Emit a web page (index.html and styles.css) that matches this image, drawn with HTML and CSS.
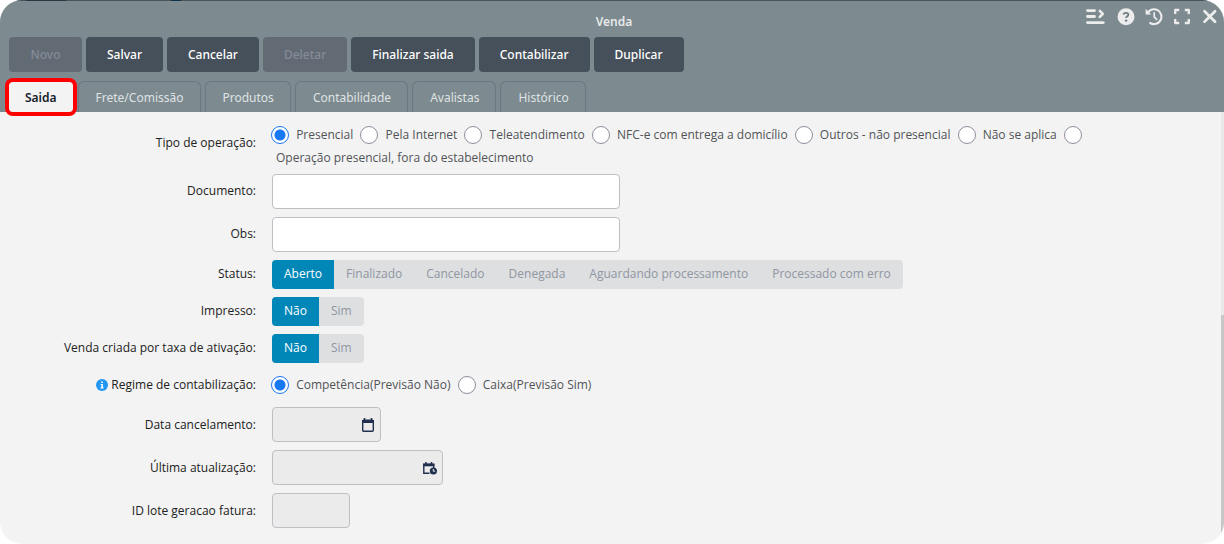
FILE: index.html
```html
<!DOCTYPE html>
<html lang="pt-BR">
<head>
<meta charset="utf-8">
<meta name="viewport" content="width=device-width, initial-scale=1">
<title>Venda</title>
<link rel="stylesheet" href="styles.css">
</head>
<body>
<main class="window">
  <header class="header">
    <div class="titlebar">
      <h1 class="title">Venda</h1>
      <div class="tools">
        <button class="tool" type="button" aria-label="Menu">
          <svg width="22" height="18" viewBox="0 0 22 18" fill="none" stroke="currentColor" stroke-width="2.9" stroke-linecap="round"><path d="M2.500 2.600h7M2.500 8.500h7M2.500 14.600h15.800"/><path d="M14.800 2.800l3 3-3 3" stroke-linejoin="round" stroke-width="2.600"/></svg>
        </button>
        <button class="tool" type="button" aria-label="Ajuda">
          <svg width="18" height="18" viewBox="0 0 18 18"><circle cx="9" cy="8.700" r="8.500" fill="currentColor"/><path d="M6.500 6.700c.2-1.300 1.200-1.900 2.400-1.900 1.500 0 2.500.8 2.500 2 0 1.500-2.300 1.500-2.300 3.300" fill="none" stroke="#6e7b80" stroke-width="1.800"/><circle cx="9.100" cy="12.600" r="1.200" fill="#6e7b80"/></svg>
        </button>
        <button class="tool" type="button" aria-label="Histórico de alterações">
          <svg width="18" height="18" viewBox="0 0 18 18" fill="none" stroke="currentColor" stroke-width="2.100"><path d="M2.500 5.200A7.400 7.400 0 1 1 5.200 15" stroke-linecap="round"/><path d="M.6 .8v5.600h5.600z" fill="currentColor" stroke="none"/><path d="M9.200 5v4l2.400 2.400" stroke-width="1.800" stroke-linecap="round"/></svg>
        </button>
        <button class="tool" type="button" aria-label="Tela cheia">
          <svg width="18" height="18" viewBox="0 0 18 18" fill="none" stroke="currentColor" stroke-width="2.300" stroke-linejoin="round"><path d="M2.200 6v-4h4M11.800 2h4v4M15.800 11v4h-4M6.200 15h-4v-4"/></svg>
        </button>
        <button class="tool" type="button" aria-label="Fechar">
          <svg width="18" height="18" viewBox="0 0 18 18" fill="none" stroke="currentColor" stroke-width="2.700" stroke-linecap="round"><path d="M3.500 3.200l10.600 10.600M14.100 3.200l-10.600 10.600"/></svg>
        </button>
      </div>
    </div>
    <div class="actions">
      <button class="action" type="button" disabled>Novo</button>
      <button class="action" type="button">Salvar</button>
      <button class="action" type="button">Cancelar</button>
      <button class="action" type="button" disabled>Deletar</button>
      <button class="action" type="button">Finalizar saida</button>
      <button class="action" type="button">Contabilizar</button>
      <button class="action" type="button">Duplicar</button>
    </div>
    <nav class="tabs">
      <button class="tab tab-active" type="button">Saida</button>
      <button class="tab" type="button">Frete/Comissão</button>
      <button class="tab" type="button">Produtos</button>
      <button class="tab" type="button">Contabilidade</button>
      <button class="tab" type="button">Avalistas</button>
      <button class="tab" type="button">Histórico</button>
    </nav>
  </header>

  <form class="form">
    <div class="row">
      <span class="label" id="tipo">Tipo de operação:</span>
      <div class="radios" role="radiogroup" aria-labelledby="tipo">
        <input class="radio" type="radio" name="tipo" id="t1" checked>
        <label class="option" for="t1">Presencial</label>
        <input class="radio" type="radio" name="tipo" id="t2">
        <label class="option" for="t2">Pela Internet</label>
        <input class="radio" type="radio" name="tipo" id="t3">
        <label class="option" for="t3">Teleatendimento</label>
        <input class="radio" type="radio" name="tipo" id="t4">
        <label class="option" for="t4">NFC-e com entrega a domicílio</label>
        <input class="radio" type="radio" name="tipo" id="t5">
        <label class="option" for="t5">Outros - não presencial</label>
        <input class="radio" type="radio" name="tipo" id="t6">
        <label class="option" for="t6">Não se aplica</label>
        <input class="radio" type="radio" name="tipo" id="t7">
        <label class="option" for="t7">Operação presencial, fora do estabelecimento</label>
      </div>
    </div>
    <div class="row">
      <label class="label" for="documento">Documento:</label>
      <input class="field field-wide" type="text" id="documento">
    </div>
    <div class="row">
      <label class="label" for="obs">Obs:</label>
      <input class="field field-wide" type="text" id="obs">
    </div>
    <div class="row">
      <span class="label" id="status">Status:</span>
      <div class="segments" role="group" aria-labelledby="status">
        <button class="segment segment-on" type="button">Aberto</button>
        <button class="segment" type="button">Finalizado</button>
        <button class="segment" type="button">Cancelado</button>
        <button class="segment" type="button">Denegada</button>
        <button class="segment" type="button">Aguardando processamento</button>
        <button class="segment" type="button">Processado com erro</button>
      </div>
    </div>
    <div class="row">
      <span class="label" id="impresso">Impresso:</span>
      <div class="segments" role="group" aria-labelledby="impresso">
        <button class="segment segment-on" type="button">Não</button>
        <button class="segment" type="button">Sim</button>
      </div>
    </div>
    <div class="row">
      <span class="label" id="taxa">Venda criada por taxa de ativação:</span>
      <div class="segments" role="group" aria-labelledby="taxa">
        <button class="segment segment-on" type="button">Não</button>
        <button class="segment" type="button">Sim</button>
      </div>
    </div>
    <div class="row">
      <span class="label" id="regime">
        <svg class="info" width="12" height="12" viewBox="0 0 12 12"><circle cx="6" cy="6" r="6" fill="#2196f3"/><path d="M5.200 2.500h1.700v1.500H5.200zM4.600 5h2.300v3.400h.8v1.100H4.400V8.400h.9V6.100h-.7z" fill="#fff"/></svg>
        Regime de contabilização:</span>
      <div class="radios radios-single" role="radiogroup" aria-labelledby="regime">
        <input class="radio" type="radio" name="regime" id="r1" checked>
        <label class="option" for="r1">Competência(Previsão Não)</label>
        <input class="radio" type="radio" name="regime" id="r2">
        <label class="option" for="r2">Caixa(Previsão Sim)</label>
      </div>
    </div>
    <div class="row">
      <label class="label" for="cancelamento">Data cancelamento:</label>
      <div class="picker picker-date">
        <input class="field" type="text" id="cancelamento" disabled>
        <svg class="picker-icon" width="14" height="16" viewBox="0 0 14 16"><path d="M3.500 1v3M10.500 1v3" stroke="#22304f" stroke-width="1.600"/><rect x="1.700" y="3.200" width="10.600" height="11.100" rx="1" fill="none" stroke="#22304f" stroke-width="1.400"/><path d="M1 3h12v3H1z" fill="#22304f"/></svg>
      </div>
    </div>
    <div class="row">
      <label class="label" for="atualizacao">Última atualização:</label>
      <div class="picker picker-datetime">
        <input class="field" type="text" id="atualizacao" disabled>
        <svg class="picker-icon" width="14" height="16" viewBox="0 0 14 16"><path d="M3 2v2M8.500 2v2" stroke="#22304f" stroke-width="1.500"/><path d="M6.500 13.300H.8V4.500h9.900V8" fill="none" stroke="#22304f" stroke-width="1.400"/><path d="M.1 3.500h11.300v2.800H.1z" fill="#22304f"/><circle cx="10.400" cy="11" r="3.600" fill="#22304f"/><path d="M10.300 9v2.200h1.800" fill="none" stroke="#eee" stroke-width="1"/></svg>
      </div>
    </div>
    <div class="row">
      <label class="label" for="lote">ID lote geracao fatura:</label>
      <input class="field field-short" type="text" id="lote" disabled>
    </div>
    <div class="scrollbar"><div class="scrollthumb"></div></div>
  </form>
</main>
</body>
</html>
```
FILE: styles.css
```css
* {
  box-sizing: border-box;
}

body {
  margin: 0;
  background: #fff;
  font: 12px/16px "Open Sans", "Noto Sans", sans-serif;
  color: #212121;
}

button,
input {
  font: inherit;
}

.window {
  display: flex;
  flex-direction: column;
  min-height: 100vh;
  border-radius: 22px;
  overflow: hidden;
  background: #f3f3f3;
}

.header {
  padding: 0 5px 0 9px;
  background: linear-gradient(90deg, #4b5357 26px, #2c3540 26px 66px, #4b5357 66px 171px, #0b3350 171px 181px, #4b5357 181px) top / 100% 1px no-repeat #7d8a8f;
  font-family: "Noto Sans", sans-serif;
}

.titlebar {
  display: grid;
  grid-template-columns: 1fr auto 1fr;
  height: 37px;
}

.title {
  grid-column: 2;
  margin: 0;
  padding-top: 14px;
  font-size: 12px;
  line-height: 16px;
  font-weight: 600;
  color: #e6e9ea;
}

.tools {
  display: flex;
  justify-content: flex-end;
  align-items: flex-start;
  gap: 10px;
  padding-top: 8px;
}

.tool {
  padding: 0;
  border: 0;
  background: none;
  color: #ececec;
}

.tool svg {
  display: block;
}

.actions {
  display: flex;
  gap: 4px;
}

.action {
  min-width: 73px;
  height: 35px;
  padding: 0 21px;
  border: 0;
  border-radius: 4px;
  background: #46505a;
  color: #fff;
  font-weight: 500;
}

.action:disabled {
  background: #626a74;
  color: #858c98;
}

.tabs {
  display: flex;
  align-items: flex-end;
  gap: 4px;
  padding-top: 9px;
}

.tab {
  height: 31px;
  padding: 1px 16px 0 17px;
  border: 1px solid #6b787f;
  border-bottom: 0;
  border-radius: 6px 6px 0 0;
  background: none;
  color: #dfe3e4;
}

.tab-active {
  position: relative;
  height: 30px;
  margin-right: 1px;
  border-color: #f3f3f3;
  padding: 0 15px;
  border-radius: 4px;
  background: #f3f3f3;
  color: #17202a;
  font-weight: 600;
  box-shadow: 0 0 0 4px #f00;
}

.form {
  position: relative;
  flex: 1;
  display: flex;
  flex-direction: column;
  gap: 8px;
  padding: 9px 12px 16px 0;
}

.row {
  display: grid;
  grid-template-columns: 256px 1fr;
  column-gap: 16px;
  align-items: center;
}

.label {
  text-align: right;
}

.info {
  vertical-align: -2px;
}

.radios {
  line-height: 22px;
  padding-top: 2px;
  margin-bottom: -3px;
  color: #515357;
}

.radios-single {
  line-height: 28px;
  padding: 0;
  margin: 0;
}

.radio {
  appearance: none;
  width: 18px;
  height: 18px;
  margin: 0 0 0 -1px;
  border: 1px solid #8b909c;
  border-radius: 50%;
  background: #fff;
  vertical-align: middle;
}

.option + .radio {
  margin-left: 4px;
}

.radio:checked {
  border-color: #1877f2;
  background: radial-gradient(circle, #1877f2 5px, #fff 6px);
}

.option {
  display: inline-block;
  padding: 0 0 0 4px;
  vertical-align: middle;
}

.field {
  width: 100%;
  height: 35px;
  padding: 0 8px;
  border: 1px solid #bcc0c5;
  border-radius: 4px;
  background: #fff;
}

.field:disabled {
  background: #ebebeb;
}

.field-wide {
  max-width: 348px;
}

.field-short {
  width: 78px;
}

.picker {
  position: relative;
}

.picker-date {
  width: 109px;
}

.picker-datetime {
  width: 171px;
}

.picker .field {
  display: block;
}

.picker-icon {
  position: absolute;
  right: 6px;
  top: 10px;
}

.segments {
  display: flex;
  justify-self: start;
  overflow: hidden;
  border-radius: 4px;
  background: #dddfe1;
}

.segment {
  height: 29px;
  padding: 0 12px;
  border: 0;
  background: none;
  color: #9096a1;
}

.segment-on {
  background: #0087b7;
  color: #fff;
}

.scrollbar {
  position: absolute;
  top: 0;
  right: 0;
  bottom: 0;
  width: 3px;
  display: flex;
  align-items: flex-end;
  background: #e9e9e9;
}

.scrollthumb {
  width: 100%;
  height: 53%;
  background: #c6c7c7;
}
```
